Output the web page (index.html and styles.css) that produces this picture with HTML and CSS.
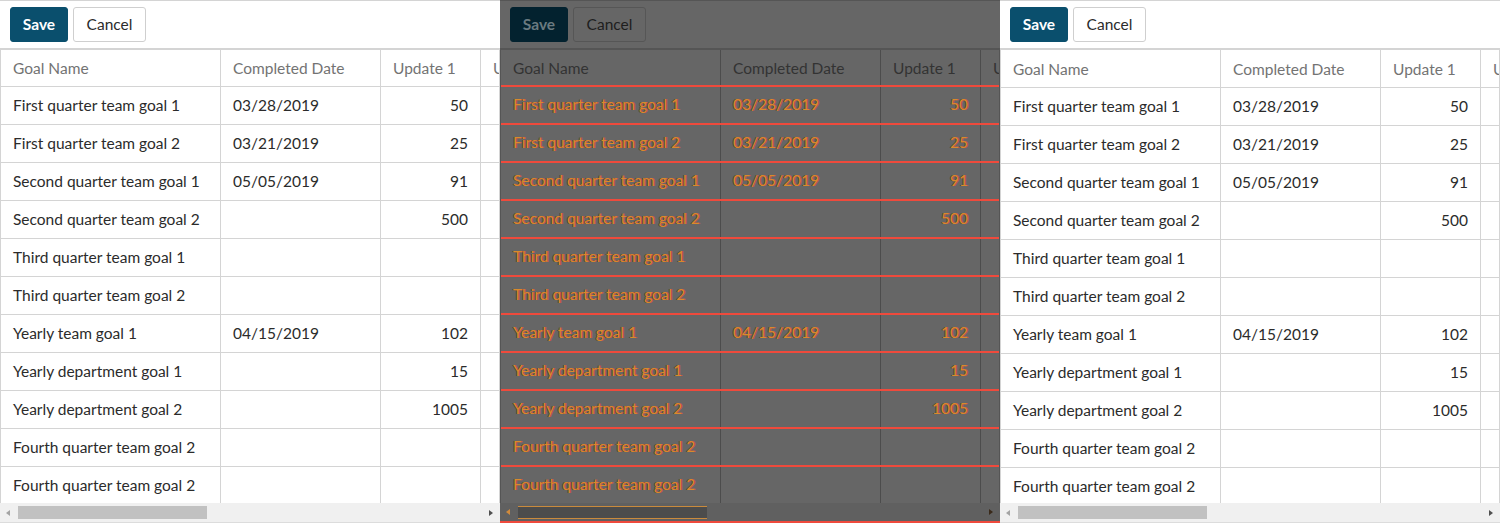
FILE: index.html
```html
<!DOCTYPE html>
<html>
<head>
<meta charset="utf-8">
<link rel="stylesheet" href="styles.css">
</head>
<body>
<div class="stage">
  <section class="panel">
    <div class="toolbar"><button class="btn btn-save">Save</button><button class="btn btn-cancel">Cancel</button></div>
    <div class="grid">
      <div class="row head"><div class="c c1">Goal Name</div><div class="c c2">Completed Date</div><div class="c c3">Update 1</div><div class="c c4">U</div></div>
      <div class="row"><div class="c c1">First quarter team goal 1</div><div class="c c2">03/28/2019</div><div class="c c3 num">50</div><div class="c c4"></div></div>
      <div class="row"><div class="c c1">First quarter team goal 2</div><div class="c c2">03/21/2019</div><div class="c c3 num">25</div><div class="c c4"></div></div>
      <div class="row"><div class="c c1">Second quarter team goal 1</div><div class="c c2">05/05/2019</div><div class="c c3 num">91</div><div class="c c4"></div></div>
      <div class="row"><div class="c c1">Second quarter team goal 2</div><div class="c c2"></div><div class="c c3 num">500</div><div class="c c4"></div></div>
      <div class="row"><div class="c c1">Third quarter team goal 1</div><div class="c c2"></div><div class="c c3 num"></div><div class="c c4"></div></div>
      <div class="row"><div class="c c1">Third quarter team goal 2</div><div class="c c2"></div><div class="c c3 num"></div><div class="c c4"></div></div>
      <div class="row"><div class="c c1">Yearly team goal 1</div><div class="c c2">04/15/2019</div><div class="c c3 num">102</div><div class="c c4"></div></div>
      <div class="row"><div class="c c1">Yearly department goal 1</div><div class="c c2"></div><div class="c c3 num">15</div><div class="c c4"></div></div>
      <div class="row"><div class="c c1">Yearly department goal 2</div><div class="c c2"></div><div class="c c3 num">1005</div><div class="c c4"></div></div>
      <div class="row"><div class="c c1">Fourth quarter team goal 2</div><div class="c c2"></div><div class="c c3 num"></div><div class="c c4"></div></div>
      <div class="row"><div class="c c1">Fourth quarter team goal 2</div><div class="c c2"></div><div class="c c3 num"></div><div class="c c4"></div></div>
    </div>
    <div class="hscroll"><span class="arr arr-l"></span><span class="thumb"></span><span class="arr arr-r"></span></div>
  </section>

  <section class="panel dark">
    <div class="toolbar"><button class="btn btn-save">Save</button><button class="btn btn-cancel">Cancel</button></div>
    <div class="grid">
      <div class="row head"><div class="c c1">Goal Name</div><div class="c c2">Completed Date</div><div class="c c3">Update 1</div><div class="c c4">U</div></div>
      <div class="row"><div class="c c1">First quarter team goal 1</div><div class="c c2">03/28/2019</div><div class="c c3 num">50</div><div class="c c4"></div></div>
      <div class="row"><div class="c c1">First quarter team goal 2</div><div class="c c2">03/21/2019</div><div class="c c3 num">25</div><div class="c c4"></div></div>
      <div class="row"><div class="c c1">Second quarter team goal 1</div><div class="c c2">05/05/2019</div><div class="c c3 num">91</div><div class="c c4"></div></div>
      <div class="row"><div class="c c1">Second quarter team goal 2</div><div class="c c2"></div><div class="c c3 num">500</div><div class="c c4"></div></div>
      <div class="row"><div class="c c1">Third quarter team goal 1</div><div class="c c2"></div><div class="c c3 num"></div><div class="c c4"></div></div>
      <div class="row"><div class="c c1">Third quarter team goal 2</div><div class="c c2"></div><div class="c c3 num"></div><div class="c c4"></div></div>
      <div class="row"><div class="c c1">Yearly team goal 1</div><div class="c c2">04/15/2019</div><div class="c c3 num">102</div><div class="c c4"></div></div>
      <div class="row"><div class="c c1">Yearly department goal 1</div><div class="c c2"></div><div class="c c3 num">15</div><div class="c c4"></div></div>
      <div class="row"><div class="c c1">Yearly department goal 2</div><div class="c c2"></div><div class="c c3 num">1005</div><div class="c c4"></div></div>
      <div class="row"><div class="c c1">Fourth quarter team goal 2</div><div class="c c2"></div><div class="c c3 num"></div><div class="c c4"></div></div>
      <div class="row"><div class="c c1">Fourth quarter team goal 2</div><div class="c c2"></div><div class="c c3 num"></div><div class="c c4"></div></div>
    </div>
    <div class="hscroll"><span class="arr arr-l"></span><span class="thumb"></span><span class="arr arr-r"></span></div>
  </section>

  <section class="panel tall">
    <div class="toolbar"><button class="btn btn-save">Save</button><button class="btn btn-cancel">Cancel</button></div>
    <div class="grid">
      <div class="row head"><div class="c c1">Goal Name</div><div class="c c2">Completed Date</div><div class="c c3">Update 1</div><div class="c c4">U</div></div>
      <div class="row"><div class="c c1">First quarter team goal 1</div><div class="c c2">03/28/2019</div><div class="c c3 num">50</div><div class="c c4"></div></div>
      <div class="row"><div class="c c1">First quarter team goal 2</div><div class="c c2">03/21/2019</div><div class="c c3 num">25</div><div class="c c4"></div></div>
      <div class="row"><div class="c c1">Second quarter team goal 1</div><div class="c c2">05/05/2019</div><div class="c c3 num">91</div><div class="c c4"></div></div>
      <div class="row"><div class="c c1">Second quarter team goal 2</div><div class="c c2"></div><div class="c c3 num">500</div><div class="c c4"></div></div>
      <div class="row"><div class="c c1">Third quarter team goal 1</div><div class="c c2"></div><div class="c c3 num"></div><div class="c c4"></div></div>
      <div class="row"><div class="c c1">Third quarter team goal 2</div><div class="c c2"></div><div class="c c3 num"></div><div class="c c4"></div></div>
      <div class="row"><div class="c c1">Yearly team goal 1</div><div class="c c2">04/15/2019</div><div class="c c3 num">102</div><div class="c c4"></div></div>
      <div class="row"><div class="c c1">Yearly department goal 1</div><div class="c c2"></div><div class="c c3 num">15</div><div class="c c4"></div></div>
      <div class="row"><div class="c c1">Yearly department goal 2</div><div class="c c2"></div><div class="c c3 num">1005</div><div class="c c4"></div></div>
      <div class="row"><div class="c c1">Fourth quarter team goal 2</div><div class="c c2"></div><div class="c c3 num"></div><div class="c c4"></div></div>
      <div class="row"><div class="c c1">Fourth quarter team goal 2</div><div class="c c2"></div><div class="c c3 num"></div><div class="c c4"></div></div>
    </div>
    <div class="hscroll"><span class="arr arr-l"></span><span class="thumb"></span><span class="arr arr-r"></span></div>
  </section>
</div>
</body>
</html>
```

FILE: styles.css
```css
* { box-sizing: border-box; }
html, body { margin: 0; padding: 0; background: #fff; }
body {
  font-family: "Lato", "Open Sans", sans-serif;
  font-size: 15.5px;
  color: #2b2b2b;
  overflow: hidden;
}
.stage {
  display: flex;
  width: 1500px;
  height: 523px;
}
.panel {
  width: 500px;
  height: 523px;
  display: flex;
  flex-direction: column;
  border-top: 1px solid #d4d4d4;
  background: #fff;
  overflow: hidden;
}
.toolbar {
  height: 47px;
  flex: none;
  display: flex;
  align-items: flex-start;
  gap: 5px;
  padding: 6px 10px 0;
}
.btn {
  height: 35px;
  border-radius: 3px;
  font-family: inherit;
  font-size: 15.5px;
  padding: 0 0 1px;
  cursor: pointer;
}
.btn-save {
  width: 58px;
  background: #0a4f6d;
  border: 1px solid #0a4f6d;
  color: #fff;
  font-weight: 700;
}
.btn-cancel {
  width: 73px;
  background: #fff;
  border: 1px solid #cfcfcf;
  color: #2b2b2b;
}
.grid {
  flex: 1;
  min-height: 0;
  overflow: hidden;
  border-top: 2px solid #d4d4d4;
  border-left: 1px solid #d4d4d4;
  border-right: 1px solid #d4d4d4;
}
.row {
  display: flex;
  height: 38px;
  border-bottom: 1px solid #d4d4d4;
  flex: none;
}
.row.head { height: 37px; color: #737373; }
.tall .row.head { height: 38px; }
.c {
  flex: none;
  display: flex;
  align-items: center;
  padding: 0 12px 2px;
  border-right: 1px solid #d4d4d4;
  white-space: nowrap;
  overflow: hidden;
}
.row.head .c { padding-bottom: 0; }
.c1 { width: 220px; }
.c2 { width: 160px; }
.c3 { width: 100px; }
.c4 { width: 18px; border-right: none; padding-right: 0; }
.num { justify-content: flex-end; }
.row.head .c3 { justify-content: flex-start; }

.hscroll {
  height: 20px;
  flex: none;
  display: flex;
  align-items: center;
  background: #f0f0f0;
  border-bottom: 1px solid #dcdcdc;
  padding: 0 7px 0 6px;
}
.thumb {
  width: 189px;
  height: 13px;
  background: #c1c1c1;
  margin-left: 8px;
}
.arr { width: 0; height: 0; border-top: 3px solid transparent; border-bottom: 3px solid transparent; }
.arr-l { border-right: 4px solid #a3a3a3; }
.arr-r { border-left: 4px solid #505050; margin-left: auto; }

/* dimmed diff panel */
.dark { background: #666; border-top-color: #555; }
.dark .btn-save { background: #03222f; border-color: #03222f; color: #6a7a80; }
.dark .btn-cancel { background: #666; border-color: #565656; color: #1e1e1e; }
.dark .grid { border-top-color: #555; border-left-color: #555; border-right-color: #555; }
.dark .row { border-bottom: 2px solid #ef4a3c; }
.dark .row.head { border-bottom-color: #ef4a3c; color: #333; }
.dark .c { border-right-color: #4c4c4c; }
.dark .row:not(.head) .c {
  color: #d98a2c;
  text-shadow: 1px 0 0 rgba(230, 60, 50, 0.7), -1px 0 0 rgba(40, 40, 40, 0.5);
}
.dark .hscroll { background: #606060; border-bottom: 2px solid #ef4a3c; }
.dark .thumb { background: #4c4c4c; border-top: 1px solid #c98a3c; border-bottom: 1px solid #c98a3c; }
.dark .arr-l { border-right-color: #d08a3c; }
.dark .arr-r { border-left-color: #3a2a1a; }
```
